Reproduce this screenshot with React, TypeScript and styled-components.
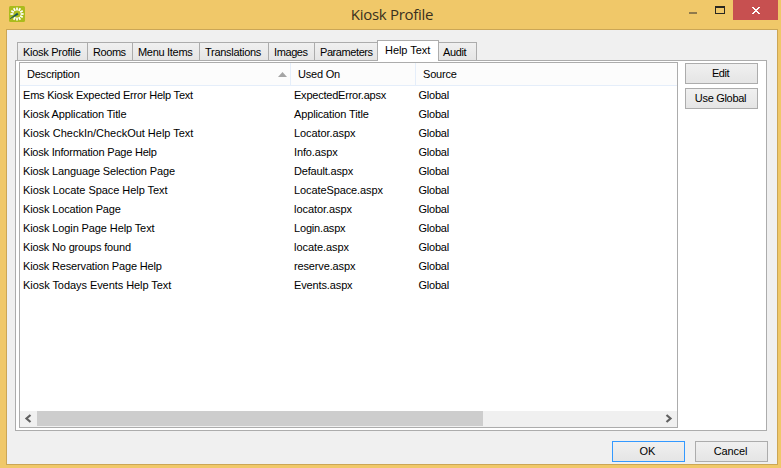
import React from 'react';
import styled, { createGlobalStyle } from 'styled-components';

const GlobalStyle = createGlobalStyle`
  *, *::before, *::after { box-sizing: border-box; }
  body { margin: 0; overflow: hidden; }
`;

const Window = styled.div`
  width: 781px;
  height: 468px;
  display: flex;
  flex-direction: column;
  padding: 0 3px 3px 6px;
  background: #f0c869;
  color: #000;
  font: 11px/13px 'Liberation Sans', Arial, sans-serif;
`;

const TitleBar = styled.header`
  height: 29px;
  flex: none;
  display: grid;
  grid-template-columns: 116px 1fr 116px;
  align-items: start;
`;

const AppIcon = styled.svg`
  width: 16px;
  height: 16px;
  margin: 6px 0 0 3px;
`;

const Title = styled.h1`
  margin: 3px 0 0;
  text-align: center;
  color: #3a3020;
  font: 400 15px/22px 'Open Sans', sans-serif;
  letter-spacing: -0.28px;
`;

const Controls = styled.div`
  display: flex;
  justify-content: flex-end;
  height: 20px;
`;

const ControlButton = styled.button<{ $width: number; $close?: boolean }>`
  width: ${p => p.$width}px;
  height: 20px;
  padding: 0;
  border: 0;
  background: ${p => (p.$close ? '#c75050' : 'transparent')};
  svg { display: block; }
`;

const Client = styled.main`
  flex: 1;
  display: flex;
  flex-direction: column;
  padding: 10px 10px 0 8px;
  border: 1px solid #cba656;
  background: #f0f0f0;
`;

const TabStrip = styled.nav`
  display: flex;
  align-items: flex-end;
  height: 20px;
  padding-left: 2px;
`;

const Tab = styled.button<{ $width: number; $active?: boolean }>`
  position: relative;
  width: ${p => p.$width}px;
  height: ${p => (p.$active ? 21 : 18)}px;
  margin: 0 -1px ${p => (p.$active ? -1 : 0)}px 0;
  padding: ${p => (p.$active ? '0 0 1px 7px' : '1px 0 0 5px')};
  z-index: ${p => (p.$active ? 1 : 0)};
  border: 1px solid #acacac;
  border-bottom: 0;
  background: ${p => (p.$active ? '#fff' : 'linear-gradient(#f0f0f0, #e5e5e5)')};
  color: #000;
  font: inherit;
  text-align: left;
  white-space: nowrap;

  &:last-child { padding-left: 4px; }
`;

const Label = styled.span<{ $spacing?: number }>`
  letter-spacing: ${p => p.$spacing ?? 0}px;
  white-space: nowrap;
`;

const Panel = styled.section`
  display: flex;
  align-items: flex-start;
  height: 371px;
  padding: 1px 8px 0 3px;
  border: 1px solid #acacac;
  background: #fff;
`;

const ListView = styled.div`
  width: 659px;
  height: 366px;
  display: flex;
  flex-direction: column;
  border: 1px solid #acacac;
  background: #fff;
`;

const HeaderRow = styled.div`
  display: grid;
  grid-template-columns: 271px 125px 1fr;
  height: 23px;
  flex: none;
  border-bottom: 1px solid #e5eefa;
  background: #fcfcfc;
`;

const HeaderCell = styled.div<{ $last?: boolean }>`
  display: flex;
  align-items: center;
  justify-content: space-between;
  padding: 0 3px 0 7px;
  border-right: ${p => (p.$last ? '0' : '1px solid #e5eefa')};
`;

const Rows = styled.div`
  flex: 1;
`;

const Row = styled.div`
  display: grid;
  grid-template-columns: 271px 124.5px 1fr;
  align-items: center;
  height: 19px;
  padding-left: 3px;
`;

const ScrollBar = styled.div`
  display: flex;
  height: 16px;
  padding-bottom: 1px;
  background: #f0f0f0;
`;

const Arrow = styled.svg`
  width: 17px;
  height: 15px;
  flex: none;
`;

const Track = styled.div`
  flex: 1;
`;

const Thumb = styled.div`
  width: 446px;
  height: 15px;
  background: #cdcdcd;
`;

const SideActions = styled.aside`
  display: flex;
  flex-direction: column;
  gap: 4px;
  margin: 1px 0 0 7px;
`;

const PushButton = styled.button<{ $default?: boolean }>`
  width: 73px;
  height: 21px;
  padding: 0 2px 0 0;
  border: 1px solid ${p => (p.$default ? '#3399ff' : '#acacac')};
  background: linear-gradient(#f0f0f0, #e5e5e5);
  color: #000;
  font: inherit;
`;

const Footer = styled.footer`
  display: flex;
  justify-content: flex-end;
  gap: 10px;
  margin: 10px -1px 0 0;
`;

const tabs = [
  { text: 'Kiosk Profile', width: 71, spacing: -0.28 },
  { text: 'Rooms', width: 46, spacing: -0.43 },
  { text: 'Menu Items', width: 68, spacing: -0.3 },
  { text: 'Translations', width: 70, spacing: -0.29 },
  { text: 'Images', width: 47, spacing: -0.4 },
  { text: 'Parameters', width: 64, spacing: -0.42 },
  { text: 'Help Text', width: 62, spacing: -0.05, active: true },
  { text: 'Audit', width: 39, spacing: -0.35 },
];

type Cell = [text: string, spacing: number];

const rows: [Cell, Cell][] = [
  [['Ems Kiosk Expected Error Help Text', -0.21], ['ExpectedError.apsx', -0.22]],
  [['Kiosk Application Title', -0.13], ['Application Title', -0.14]],
  [['Kiosk CheckIn/CheckOut Help Text', -0.02], ['Locator.aspx', -0.08]],
  [['Kiosk Information Page Help', -0.21], ['Info.aspx', -0.12]],
  [['Kiosk Language Selection Page', -0.14], ['Default.aspx', -0.18]],
  [['Kiosk Locate Space Help Text', -0.05], ['LocateSpace.aspx', -0.1]],
  [['Kiosk Location Page', -0.13], ['locator.aspx', -0.06]],
  [['Kiosk Login Page Help Text', -0.11], ['Login.aspx', -0.18]],
  [['Kiosk No groups found', -0.16], ['locate.aspx', -0.06]],
  [['Kiosk Reservation Page Help', -0.16], ['reserve.aspx', -0.14]],
  [['Kiosk Todays Events Help Text', -0.06], ['Events.aspx', -0.13]],
];

const ticks = Array.from({ length: 12 }, (_, i) => i * 30).filter(a => a !== 240);

export default function App() {
  return (
    <>
      <GlobalStyle />
      <Window>
        <TitleBar>
          <AppIcon viewBox="0 0 16 16">
            <rect width="16" height="16" rx="1.5" fill="#abbb1c" />
            {ticks.map(a => (
              <path key={a} d="M8 1.4v3" stroke="#fff" strokeWidth="1.7" transform={`rotate(${a} 8 8)`} />
            ))}
            <path d="M1 12.8 8.2 7l1 1.4Z" fill="#0b4f63" stroke="#0b4f63" strokeWidth=".4" />
          </AppIcon>
          <Title>Kiosk Profile</Title>
          <Controls>
            <ControlButton $width={27} aria-label="Minimize">
              <svg width="27" height="20"><path d="M10 12h8v2h-8z" fill="#8f7a4c" /></svg>
            </ControlButton>
            <ControlButton $width={27} aria-label="Maximize">
              <svg width="27" height="20"><path fillRule="evenodd" d="M9 6h10v8H9zM10 8v5h8V8z" fill="#292721" /></svg>
            </ControlButton>
            <ControlButton $width={45} $close aria-label="Close">
              <svg width="45" height="20" shapeRendering="crispEdges"><path d="M19 7h2v1h1v1h2v-1h1v-1h2v1h-1v1h-1v1h-1v1h1v1h1v1h1v1h-2v-1h-1v-1h-2v1h-1v1h-2v-1h1v-1h1v-1h1v-1h-1v-1h-1v-1h-1z" fill="#fff" /></svg>
            </ControlButton>
          </Controls>
        </TitleBar>
        <Client>
          <TabStrip>
            {tabs.map(t => (
              <Tab key={t.text} $width={t.width} $active={t.active}>
                <Label $spacing={t.spacing}>{t.text}</Label>
              </Tab>
            ))}
          </TabStrip>
          <Panel>
            <ListView>
              <HeaderRow>
                <HeaderCell>
                  <Label $spacing={-0.22}>Description</Label>
                  <svg width="9" height="5"><path d="M4.5 0 9 5H0z" fill="#a5a5a5" /></svg>
                </HeaderCell>
                <HeaderCell><Label $spacing={-0.2}>Used On</Label></HeaderCell>
                <HeaderCell $last><Label $spacing={-0.18}>Source</Label></HeaderCell>
              </HeaderRow>
              <Rows>
                {rows.map(([name, page]) => (
                  <Row key={name[0]}>
                    <Label $spacing={name[1]}>{name[0]}</Label>
                    <Label $spacing={page[1]}>{page[0]}</Label>
                    <Label $spacing={-0.22}>Global</Label>
                  </Row>
                ))}
              </Rows>
              <ScrollBar>
                <Arrow><path d="M10.5 4 6.5 7.5l4 3.5" fill="none" stroke="#606060" strokeWidth="2.2" /></Arrow>
                <Track><Thumb /></Track>
                <Arrow><path d="m6.5 4 4 3.5-4 3.5" fill="none" stroke="#606060" strokeWidth="2.2" /></Arrow>
              </ScrollBar>
            </ListView>
            <SideActions>
              <PushButton><Label $spacing={-0.45}>Edit</Label></PushButton>
              <PushButton><Label $spacing={-0.3}>Use Global</Label></PushButton>
            </SideActions>
          </Panel>
          <Footer>
            <PushButton $default><Label>OK</Label></PushButton>
            <PushButton><Label $spacing={-0.1}>Cancel</Label></PushButton>
          </Footer>
        </Client>
      </Window>
    </>
  );
}
